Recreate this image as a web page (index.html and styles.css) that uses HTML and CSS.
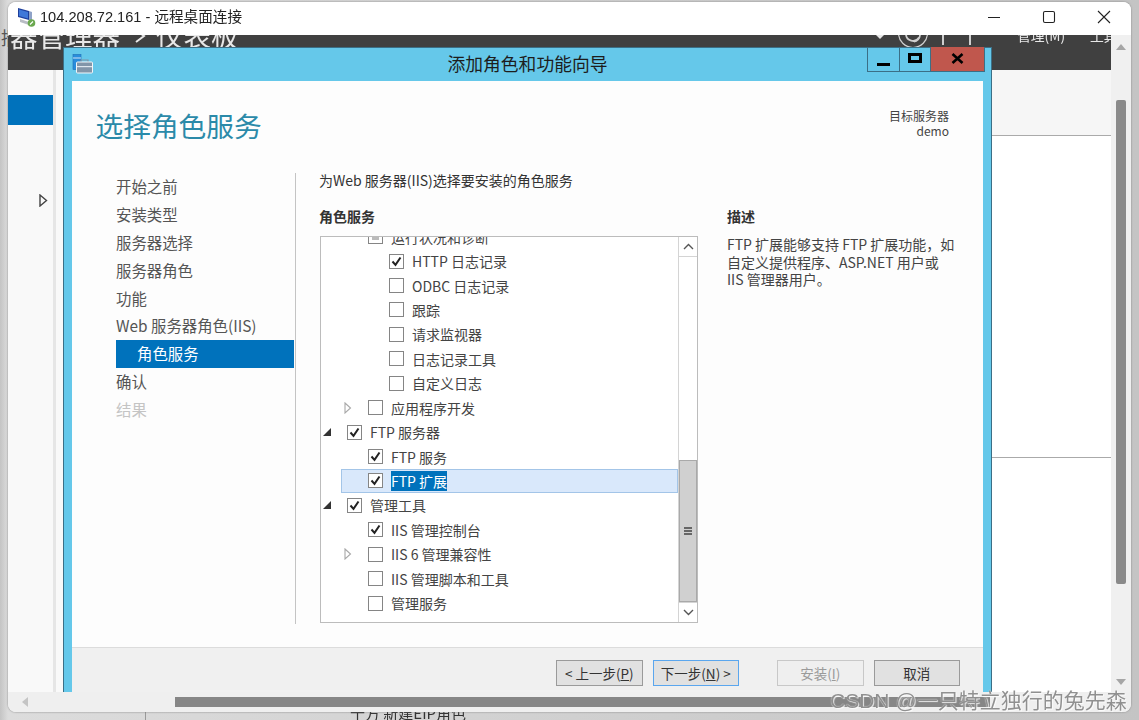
FILE: index.html
```html
<!DOCTYPE html>
<html lang="zh-CN">
<head>
<meta charset="utf-8">
<title>远程桌面连接</title>
<link rel="stylesheet" href="styles.css">
</head>
<body>
<span class="stray">揣</span>
<div class="under">十方 新建EIP角色</div>
<i class="under-line"></i>
<div class="rdp">
  <header class="rdp-title">
    <svg class="rdp-icon" width="20" height="20" viewBox="0 0 20 20"><path d="M1 0l11 3v9L1 9z" fill="#1f3f9c"/><path d="M12 3l3 1v9l-3-1z" fill="#8fa3c8"/><path d="M2 1.5l9 2.4v6.6L2 8z" fill="#3f78d8"/><path d="M3 11l9 3v3l-9-3z" fill="#b8bcc4"/><circle cx="14.5" cy="15" r="3.8" fill="#6aa84f"/><path d="M13 16.5l3-3" stroke="#fff" stroke-width="1.1"/></svg>
    <span class="rdp-text">104.208.72.161 - 远程桌面连接</span>
    <div class="win-ctl">
      <svg width="14" height="14" viewBox="0 0 14 14"><path d="M1 7.5h12" stroke="#222" stroke-width="1"/></svg>
      <svg width="14" height="14" viewBox="0 0 14 14"><rect x="1.5" y="1.5" width="11" height="11" rx="1.5" fill="none" stroke="#222" stroke-width="1.1"/></svg>
      <svg width="14" height="14" viewBox="0 0 14 14"><path d="M1 1l12 12M13 1L1 13" stroke="#222" stroke-width="1.1"/></svg>
    </div>
  </header>
  <div class="rdp-body">
    <div class="desktop">
      <div class="sm-head">
        <div class="sm-title"><span>服务器管理器</span><svg class="sm-chev" width="12" height="30" viewBox="0 0 12 30"><path d="M2 10l8 6-8 6" fill="none" stroke="#e8e8e8" stroke-width="2"/></svg><span>仪表板</span></div>
        <svg class="sm-flag" width="10" height="5" viewBox="0 0 10 5"><path d="M1 0h8L5 4z" fill="#e8e8e8"/></svg>
        <span class="sm-icons">
          <svg width="34" height="30" viewBox="0 0 34 30"><circle cx="17" cy="-2" r="14.5" fill="none" stroke="#cfcfcf" stroke-width="1.2"/><path d="M10 -1a7 7 0 0 0 13 3.500M24 0a7 7 0 0 1-6 6.500" fill="none" stroke="#cfcfcf" stroke-width="1.800"/></svg>
          <i class="tick"></i><i class="tick tick2"></i>
        </span>
        <span class="sm-menu sm-m1">管理(M)</span>
        <span class="sm-menu sm-m2">工具</span>
      </div>
      <div class="sm-main">
        <aside class="sm-side">
          <div class="sm-active"></div>
          <svg class="sm-tri" width="9" height="13" viewBox="0 0 9 13"><path d="M1 1l6.5 5.500L1 12z" fill="none" stroke="#444" stroke-width="1.4"/></svg>
        </aside>
        <div class="sm-strip"></div>
        <div class="sm-fill"></div>
        <div class="sm-right">
          <div class="sm-card-a"></div>
          <div class="sm-card-b"></div>
          <div class="sm-card-c"></div>
        </div>
      </div>

      <section class="wizard">
        <div class="wz-title">
          <svg class="wz-icon" width="21" height="20" viewBox="0 0 21 20"><rect x="1" y="0.500" width="8" height="15" fill="#2a8ddc" stroke="#1c6fb5" stroke-width=".6"/><rect x="1" y="3.500" width="8" height="1" fill="#cfe6f8"/><path d="M9 8V6h7v2" fill="none" stroke="#7f93a6" stroke-width="1.200"/><rect x="4.500" y="8" width="16" height="11" rx="1" fill="#8296a9" stroke="#f2f6f9"/><rect x="5" y="12" width="15" height="1.200" fill="#dfe7ee"/></svg>
          <span class="wz-name">添加角色和功能向导</span>
          <div class="wz-btns">
            <div class="wz-btn wz-min"><i></i></div>
            <div class="wz-btn wz-max"><i></i></div>
            <div class="wz-btn wz-close"><svg width="13" height="11" viewBox="0 0 13 11"><path d="M1.500 1l10 9M11.500 1l-10 9" stroke="#000" stroke-width="2.600"/></svg></div>
          </div>
        </div>
        <div class="wz-inner">
          <div class="wz-top">
            <h1 class="wz-h1">选择角色服务</h1>
            <div class="wz-target">目标服务器<br>demo</div>
          </div>
          <div class="wz-content">
            <nav class="nav">
              <div class="nav-i">开始之前</div>
              <div class="nav-i">安装类型</div>
              <div class="nav-i">服务器选择</div>
              <div class="nav-i">服务器角色</div>
              <div class="nav-i">功能</div>
              <div class="nav-i">Web 服务器角色(IIS)</div>
              <div class="nav-i nav-sel">角色服务</div>
              <div class="nav-i">确认</div>
              <div class="nav-i nav-off">结果</div>
            </nav>
            <div class="panel">
              <p class="lead">为Web 服务器(IIS)选择要安装的角色服务</p>
              <div class="cols">
                <div class="col-l">
                  <h2 class="sub">角色服务</h2>
                  <div class="tree">
                    <div class="tree-list">
                      <div class="row l2"><span class="exp"></span><span class="cb"><i class="part"></i></span><span>运行状况和诊断</span></div>
                      <div class="row l3"><span class="exp"></span><span class="cb"><svg width="13" height="13" viewBox="0 0 13 13"><path d="M2.500 6.500l3 3.400 5-7.400" fill="none" stroke="#222" stroke-width="2"/></svg></span><span>HTTP 日志记录</span></div>
                      <div class="row l3"><span class="exp"></span><span class="cb"></span><span>ODBC 日志记录</span></div>
                      <div class="row l3"><span class="exp"></span><span class="cb"></span><span>跟踪</span></div>
                      <div class="row l3"><span class="exp"></span><span class="cb"></span><span>请求监视器</span></div>
                      <div class="row l3"><span class="exp"></span><span class="cb"></span><span>日志记录工具</span></div>
                      <div class="row l3"><span class="exp"></span><span class="cb"></span><span>自定义日志</span></div>
                      <div class="row l2"><span class="exp"><svg width="8" height="12" viewBox="0 0 8 12"><path d="M1 1l5.500 5L1 11z" fill="none" stroke="#a8a8a8" stroke-width="1.100"/></svg></span><span class="cb"></span><span>应用程序开发</span></div>
                      <div class="row l1"><span class="exp"><svg width="8" height="8" viewBox="0 0 8 8"><path d="M8 0v8H0z" fill="#333"/></svg></span><span class="cb"><svg width="13" height="13" viewBox="0 0 13 13"><path d="M2.500 6.500l3 3.400 5-7.400" fill="none" stroke="#222" stroke-width="2"/></svg></span><span>FTP 服务器</span></div>
                      <div class="row l2"><span class="exp"></span><span class="cb"><svg width="13" height="13" viewBox="0 0 13 13"><path d="M2.500 6.500l3 3.400 5-7.400" fill="none" stroke="#222" stroke-width="2"/></svg></span><span>FTP 服务</span></div>
                      <div class="row l2 row-sel"><span class="exp"></span><span class="cb"><svg width="13" height="13" viewBox="0 0 13 13"><path d="M2.500 6.500l3 3.400 5-7.400" fill="none" stroke="#222" stroke-width="2"/></svg></span><span class="hl">FTP 扩展</span></div>
                      <div class="row l1"><span class="exp"><svg width="8" height="8" viewBox="0 0 8 8"><path d="M8 0v8H0z" fill="#333"/></svg></span><span class="cb"><svg width="13" height="13" viewBox="0 0 13 13"><path d="M2.500 6.500l3 3.400 5-7.400" fill="none" stroke="#222" stroke-width="2"/></svg></span><span>管理工具</span></div>
                      <div class="row l2"><span class="exp"></span><span class="cb"><svg width="13" height="13" viewBox="0 0 13 13"><path d="M2.500 6.500l3 3.400 5-7.400" fill="none" stroke="#222" stroke-width="2"/></svg></span><span>IIS 管理控制台</span></div>
                      <div class="row l2"><span class="exp"><svg width="8" height="12" viewBox="0 0 8 12"><path d="M1 1l5.500 5L1 11z" fill="none" stroke="#a8a8a8" stroke-width="1.100"/></svg></span><span class="cb"></span><span>IIS 6 管理兼容性</span></div>
                      <div class="row l2"><span class="exp"></span><span class="cb"></span><span>IIS 管理脚本和工具</span></div>
                      <div class="row l2"><span class="exp"></span><span class="cb"></span><span>管理服务</span></div>
                    </div>
                    <div class="tree-sb">
                      <div class="sb-btn"><svg width="11" height="7" viewBox="0 0 11 7"><path d="M1 6l4.500-4.500L10 6" fill="none" stroke="#555" stroke-width="1.400"/></svg></div>
                      <div class="sb-track"></div>
                      <div class="sb-thumb"><i></i><i></i><i></i></div>
                      <div class="sb-btn"><svg width="11" height="7" viewBox="0 0 11 7"><path d="M1 1l4.500 4.500L10 1" fill="none" stroke="#555" stroke-width="1.400"/></svg></div>
                    </div>
                  </div>
                </div>
                <div class="col-r">
                  <h2 class="sub">描述</h2>
                  <p class="desc">FTP 扩展能够支持 FTP 扩展功能，如<br>自定义提供程序、ASP.NET 用户或<br>IIS 管理器用户。</p>
                </div>
              </div>
            </div>
          </div>
          <footer class="wz-foot">
            <button class="btn">&lt; 上一步(<u>P</u>)</button>
            <button class="btn btn-next">下一步(<u>N</u>) &gt;</button>
            <button class="btn btn-off">安装(<u>I</u>)</button>
            <button class="btn">取消</button>
          </footer>
        </div>
      </section>
    </div>
    <div class="v-sb">
      <svg class="arr" width="10" height="6" viewBox="0 0 10 6"><path d="M0 6l5-6 5 6z" fill="#a6a6a6"/></svg>
      <div class="v-thumb"></div>
      <svg class="arr" width="10" height="6" viewBox="0 0 10 6"><path d="M0 0l5 6 5-6z" fill="#a6a6a6"/></svg>
    </div>
  </div>
  <div class="h-sb">
    <svg width="6" height="10" viewBox="0 0 6 10"><path d="M6 0L0 5l6 5z" fill="#c4c4c4"/></svg>
    <div class="h-thumb"></div>
  </div>
</div>
<div class="mark">CSDN @一只特立独行的兔先森</div>
</body>
</html>
```
FILE: styles.css
```css
* { box-sizing: border-box; }
html, body { margin: 0; height: 720px; overflow: hidden; }
body {
  position: relative;
  width: 1139px;
  background: linear-gradient(90deg, #c4c4c4 0, #dcdcdc 8px, #c4c4c4 100%);
  font-family: "Noto Sans CJK SC", "Noto Sans", sans-serif;
  color: #333;
}
.stray { position: absolute; left: 1px; top: 24px; font-size: 18px; width: 7px; overflow: hidden; color: #555; }
.under { position: absolute; left: 350px; top: 702px; font-size: 15px; color: #333; filter: blur(.3px); }
.under-line { position: absolute; left: 145px; top: 712px; width: 1px; height: 8px; background: #999; }
.rdp {
  position: absolute; left: 8px; top: 2px; width: 1123px; height: 710px;
  background: #fff; border-radius: 8px; overflow: hidden;
  display: flex; flex-direction: column;
  box-shadow: 0 0 2px #777;
  filter: blur(.3px);
}
.rdp-title { height: 33px; flex: none; display: flex; align-items: flex-start; padding: 6px 0 0 9px; background: #fff; }
.rdp-icon { flex: none; margin-right: 3px; }
.rdp-text { font-size: 14.6px; line-height: 19px; color: #222; font-family: "Liberation Sans", "Noto Sans CJK SC", sans-serif; }
.win-ctl { margin-left: auto; display: flex; gap: 41px; padding: 2px 20px 0 0; }
.rdp-body { flex: 1; display: flex; min-height: 0; }
.desktop { position: relative; width: 1103px; overflow: hidden; display: flex; flex-direction: column; background: #f8f8f8; }

.sm-head { height: 35px; flex: none; background: #404040; color: #e8e8e8; display: flex; position: relative; overflow: hidden; }
.sm-title { position: absolute; left: -53px; top: -20px; font-size: 27.5px; line-height: 40px; white-space: nowrap; display: flex; align-items: center; }
.sm-chev { margin: 0 10px 0 14px; }
.sm-flag { position: absolute; left: 867px; top: 0; }
.sm-icons { position: absolute; left: 888px; top: 0; display: flex; }
.tick { width: 2px; height: 10px; background: #cfcfcf; margin-left: 12px; }
.tick2 { margin-left: 25px; }
.sm-menu { position: absolute; top: -9px; font-size: 13.8px; line-height: 18px; color: #e8e8e8; }
.sm-m1 { left: 1009px; }
.sm-m2 { left: 1082px; width: 21px; overflow: hidden; white-space: nowrap; }

.sm-main { flex: 1; display: flex; min-height: 0; }
.sm-side { width: 45px; flex: none; position: relative; background: #f9f9f9; }
.sm-active { height: 30px; margin-top: 25px; background: #0072bc; }
.sm-tri { position: absolute; left: 31px; top: 124px; }
.sm-strip { width: 3px; flex: none; background: #e6e6e6; }
.sm-fill { flex: 1; background: #f9f9f9; }
.sm-right { width: 119px; flex: none; display: flex; flex-direction: column; background: #fff; }
.sm-card-a { height: 66px; flex: none; background: #f6f6f6; border-bottom: 1px solid #aaa; }
.sm-card-b { height: 322px; flex: none; background: #fff; border-bottom: 1px solid #aaa; }
.sm-card-c { flex: 1; background: #fff; }

.wizard {
  position: absolute; left: 55px; top: 12px; width: 929px; height: 660px;
  background: #65c8ea; border: 1px solid #3b6f86;
  border-bottom: 0;
  display: flex; flex-direction: column; padding: 0 8px;
}
.wz-title { height: 33px; flex: none; position: relative; display: flex; align-items: center; justify-content: center; }
.wz-icon { position: absolute; left: 0; top: 6px; }
.wz-name { font-size: 17.8px; color: #1d1d1d; margin-top: -3px; }
.wz-btns { position: absolute; right: -2px; top: -1px; display: flex; height: 25px; border: 1px solid #3b6f86; border-top: 0; }
.wz-btn { display: flex; align-items: center; justify-content: center; }
.wz-min { width: 32px; border-right: 1px solid #3b6f86; }
.wz-min i { display: block; width: 13px; height: 3px; background: #000; margin-top: 10px; }
.wz-max { width: 30px; }
.wz-max i { display: block; width: 14px; height: 10px; border: 3px solid #000; margin-top: -3px; }
.wz-close { width: 54px; background: #c0574d; border-left: 1px solid #3b6f86; }
.wz-close svg { margin-top: -2px; }

.wz-inner { flex: 1; min-height: 0; display: flex; flex-direction: column; background: #fdfdfd; }
.wz-top { height: 92px; flex: none; display: flex; justify-content: space-between; padding: 24px 34px 0 23.5px; }
.wz-h1 { margin: 0; font-size: 27.7px; font-weight: 400; line-height: 40px; color: #2b8aa9; }
.wz-target { font-size: 12px; line-height: 15px; text-align: right; color: #444; margin-top: 3px; }
.wz-content { height: 474px; flex: none; display: flex; }
.nav { width: 224px; flex: none; margin-left: 0; padding: 0 0 0 44px; display: flex; flex-direction: column; position: relative; }
.nav::after { content: ""; position: absolute; left: 223px; top: 0; bottom: 23px; width: 1px; background: #c4c4c4; }
.nav-i { height: 27.9px; flex: none; font-size: 15.4px; line-height: 26px; color: #555; white-space: nowrap; width: 177.5px; }
.nav-sel { background: #0072bc; color: #fff; padding-left: 21px; }
.nav-off { color: #c4c4c4; }

.panel { flex: 1; padding-left: 23px; min-width: 0; }
.lead { margin: -3px 0 0; font-size: 14px; line-height: 20px; color: #333; }
.cols { display: flex; margin-top: 16px; }
.col-l { width: 379px; flex: none; }
.col-r { width: 232px; margin-left: 29px; flex: none; }
.sub { margin: 0; font-size: 14px; font-weight: 700; line-height: 20px; color: #333; }
.tree {
  margin: 10px 0 0 1px; width: 378px; height: 387px;
  border: 1.5px solid #bcbcbc; background: #fff; display: flex; overflow: hidden;
}
.tree-list { flex: 1; min-width: 0; overflow: hidden; }
.row { height: 24.43px; margin-top: 0; display: flex; align-items: center; font-size: 14px; color: #444; white-space: nowrap; }
.row:first-child { margin-top: -12.5px; }
.l1 { padding-left: 2px; }
.l2 { padding-left: 23px; }
.l3 { padding-left: 44px; }
.exp { width: 24px; flex: none; display: flex; align-items: center; }
.cb { width: 15px; height: 15px; flex: none; border: 1px solid #858585; background: #fff; margin-right: 8px; display: flex; align-items: center; justify-content: center; }
.part { display: block; width: 7px; height: 7px; background: #bbb; }
.row-sel { background: #d9e8fb; box-shadow: inset 0 0 0 1px #a3c5e8; margin-left: 20px; padding-left: 3px; }
.hl { background: #0072bc; color: #fff; }
.tree-sb { width: 19px; flex: none; display: flex; flex-direction: column; border-left: 1px solid #d4d4d4; }
.sb-btn { height: 20px; flex: none; display: flex; align-items: center; justify-content: center; background: #fff; border-bottom: 1px solid #d4d4d4; }
.sb-btn:last-child { border-bottom: 0; border-top: 1px solid #d4d4d4; }
.sb-track { height: 203px; flex: none; }
.sb-thumb { flex: 1; background: #d0d0d0; border: 1px solid #a9a9a9; display: flex; flex-direction: column; align-items: center; justify-content: center; gap: 1.5px; }
.sb-thumb i { display: block; width: 8px; height: 1.5px; background: #666; }
.desc { margin: 10px 0 0; font-size: 14px; line-height: 17.7px; color: #444; white-space: nowrap; }

.wz-foot { flex: 1; background: #f0f0f0; border-top: 1px solid #dcdcdc; display: flex; align-items: flex-start; padding: 12px 0 0 484px; }
.btn {
  width: 86.5px; height: 26px; padding: 0; font: inherit; font-size: 13.5px; line-height: 22px; color: #333;
  background: #e1e1e1; border: 1px solid #9a9a9a; margin-right: 10px;
}
.btn-next { border-color: #5aa6ee; margin-right: 38px; }
.btn-off { color: #9a9a9a; background: #efefef; border-color: #c8c8c8; }

.v-sb { width: 20px; flex: none; background: #f0f0f0; display: flex; flex-direction: column; align-items: center; padding: 9px 0 7px; }
.v-thumb { width: 10px; height: 484px; margin-top: 50px; background: #8a8a8a; border-radius: 2px; }
.v-sb .arr:last-child { margin-top: auto; }
.h-sb { height: 20px; flex: none; background: #efefef; display: flex; align-items: center; padding-left: 14px; }
.h-thumb { width: 815px; height: 10px; margin-left: 147px; background: #868686; }

.mark {
  position: absolute; left: 830px; top: 689px; font-size: 21px; line-height: 24px; white-space: nowrap;
  color: rgba(125,125,125,.85); text-shadow: 0 0 1px #fff, 1px 1px 1px rgba(255,255,255,.8);
  font-family: "Liberation Sans", "Noto Sans CJK SC", sans-serif;
}
```
